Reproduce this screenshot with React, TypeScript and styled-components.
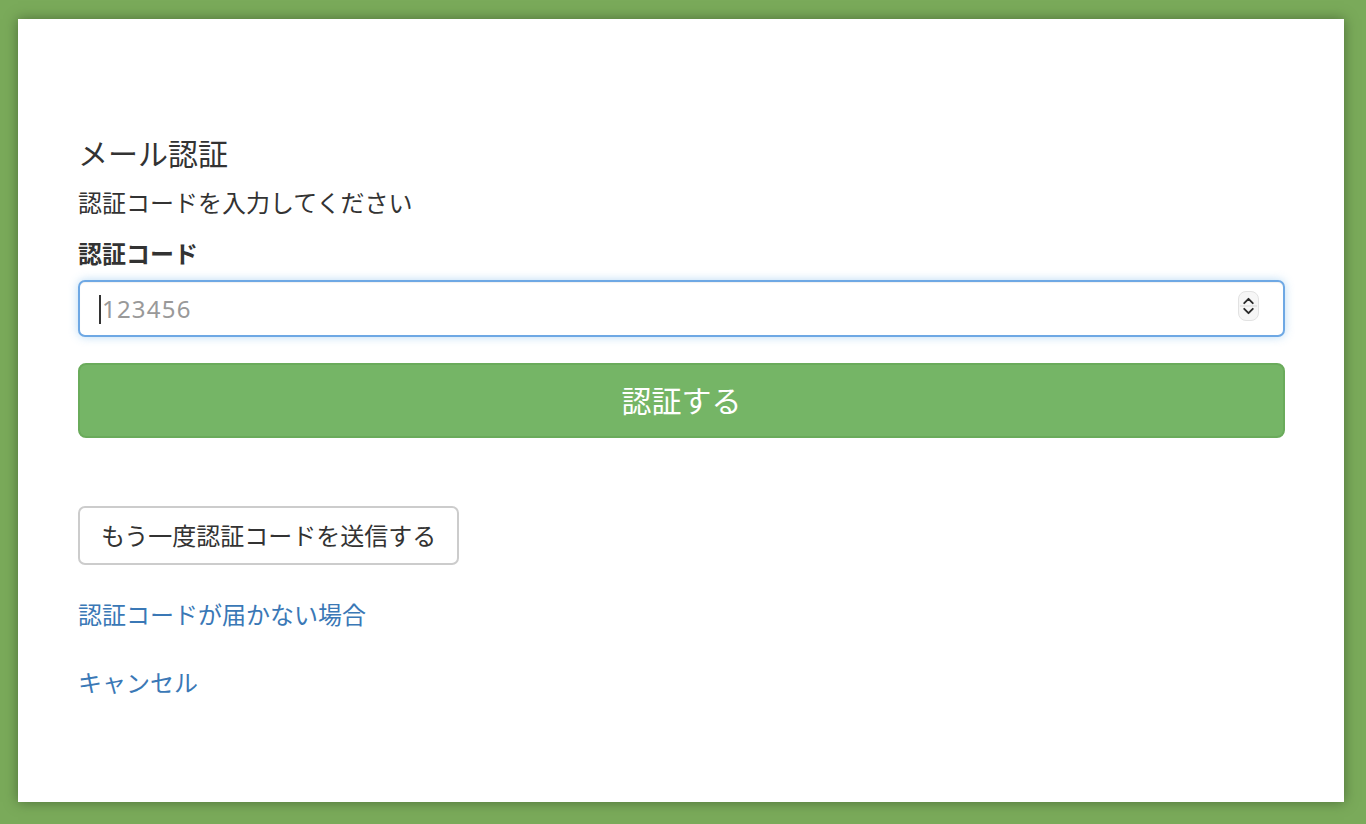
import React from "react";
import styled, { createGlobalStyle } from "styled-components";

const GlobalStyle = createGlobalStyle`
  html, body {
    margin: 0;
    padding: 0;
    background: #7aaa5a;
  }
  body {
    font-family: "Noto Sans CJK JP", "Noto Sans", sans-serif;
    color: #333;
  }
  * {
    box-sizing: border-box;
  }
`;

export default function App() {
  return (
    <>
      <GlobalStyle />
      <Page>
        <Card>
          <Title>メール認証</Title>
          <Lead>認証コードを入力してください</Lead>
          <Label htmlFor="code">認証コード</Label>
          <InputWrap>
            <CodeInput id="code" type="text" inputMode="numeric" placeholder="123456" />
            <Caret />
            <Spinner>
              <svg width="20" height="30" viewBox="0 0 20 30">
                <path d="M5.5 12 L10 7.5 L14.5 12" fill="none" stroke="#2a2a2a" strokeWidth="2" strokeLinecap="round" strokeLinejoin="round" />
                <line x1="1" y1="15" x2="19" y2="15" stroke="#d6d6d6" strokeWidth="1" />
                <path d="M5.5 18 L10 22.5 L14.5 18" fill="none" stroke="#2a2a2a" strokeWidth="2" strokeLinecap="round" strokeLinejoin="round" />
              </svg>
            </Spinner>
          </InputWrap>
          <SubmitButton type="button">認証する</SubmitButton>
          <ResendButton type="button">もう一度認証コードを送信する</ResendButton>
          <TextLink href="#" $top={31}>認証コードが届かない場合</TextLink>
          <TextLink href="#" $top={32}>キャンセル</TextLink>
        </Card>
      </Page>
    </>
  );
}

const Page = styled.div`
  padding: 19px 22px 22px 18px;
  height: 824px;
`;

const Card = styled.div`
  display: flex;
  flex-direction: column;
  align-items: flex-start;
  height: 783px;
  padding: 117px 59px 0 60px;
  background: #fff;
  box-shadow: 0 0 12px rgba(40, 60, 30, 0.55);
`;

const Title = styled.h1`
  margin: 0;
  font-size: 30px;
  font-weight: 400;
  line-height: 33px;
`;

const Lead = styled.p`
  margin: 15px 0 0;
  font-size: 24px;
  line-height: 36px;
`;

const Label = styled.label`
  margin-top: 15px;
  font-size: 24px;
  font-weight: 700;
  line-height: 36px;
`;

const InputWrap = styled.div`
  position: relative;
  align-self: stretch;
  margin-top: 9px;
`;

const CodeInput = styled.input`
  display: block;
  width: 100%;
  height: 57px;
  padding: 0 22px;
  font-family: "Noto Sans", "DejaVu Sans", sans-serif;
  font-size: 24px;
  letter-spacing: 1.2px;
  color: #555;
  background: #fff;
  border: 2px solid #6ea8e4;
  border-radius: 7px;
  outline: none;
  box-shadow: inset 0 1px 1px rgba(0, 0, 0, 0.06), 0 0 10px rgba(102, 175, 233, 0.45);

  &::placeholder {
    color: #999;
  }
`;

const Caret = styled.span`
  position: absolute;
  left: 21px;
  top: 15px;
  width: 2px;
  height: 29px;
  background: #333;
`;

const Spinner = styled.div`
  position: absolute;
  right: 26px;
  top: 11px;
  width: 21px;
  height: 30px;
  display: flex;
  align-items: center;
  justify-content: center;
  background: #f6f6f6;
  border: 1px solid #e2e2e2;
  border-radius: 8px;
  overflow: hidden;
`;

const SubmitButton = styled.button`
  align-self: stretch;
  margin-top: 26px;
  height: 75px;
  padding: 0 0 4px;
  font-family: inherit;
  font-size: 30px;
  color: #fff;
  background: #75b566;
  border: 2px solid #6aab5b;
  border-radius: 8px;
  cursor: pointer;
`;

const ResendButton = styled.button`
  margin-top: 68px;
  height: 59px;
  padding: 0 21px 2px;
  font-family: inherit;
  font-size: 24px;
  color: #333;
  background: #fff;
  border: 2px solid #ccc;
  border-radius: 7px;
  cursor: pointer;
`;

const TextLink = styled.a<{ $top: number }>`
  margin-top: ${(p) => p.$top}px;
  font-size: 24px;
  line-height: 36px;
  color: #3a78b6;
  text-decoration: none;
`;
